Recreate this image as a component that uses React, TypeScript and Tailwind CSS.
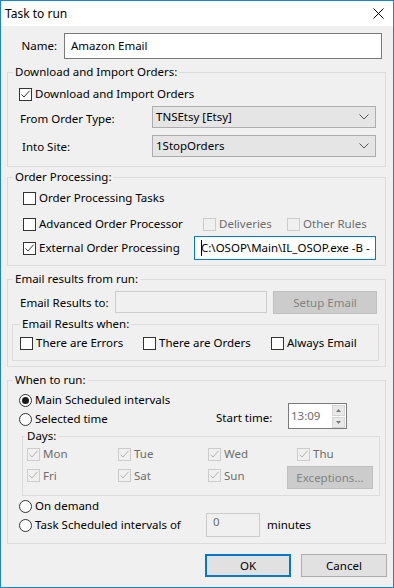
import React from "react";

function Check({ checked = false, disabled = false }: { checked?: boolean; disabled?: boolean }) {
  return (
    <span
      className={
        disabled
          ? "w-[13px] h-[13px] border border-[#cccccc] bg-[#f0f0f0] flex items-center justify-center shrink-0"
          : "w-[13px] h-[13px] border border-[#333333] bg-white flex items-center justify-center shrink-0"
      }
    >
      {checked && (
        <svg width="11" height="11" viewBox="0 0 11 11">
          <path
            d="M1.5 5.5 L4 8 L9.5 1.8"
            fill="none"
            stroke={disabled ? "#b0b0b0" : "#333333"}
            strokeWidth="1"
          />
        </svg>
      )}
    </span>
  );
}

function Radio({ checked = false }: { checked?: boolean }) {
  return (
    <span className="w-[13px] h-[13px] rounded-full border border-[#333333] bg-white flex items-center justify-center shrink-0">
      {checked && <span className="w-[7px] h-[7px] rounded-full bg-[#1a1a1a]" />}
    </span>
  );
}

function Chevron() {
  return (
    <svg width="10" height="6" viewBox="0 0 10 6">
      <path d="M0.5 0.5 L5 5 L9.5 0.5" fill="none" stroke="#555555" strokeWidth="1" />
    </svg>
  );
}

function Select({ value }: { value: string }) {
  return (
    <div className="w-[224px] h-[22px] border border-[#adadad] bg-[#e5e5e5] flex items-center justify-between pl-[3px] pr-[6px]">
      <span>{value}</span>
      <Chevron />
    </div>
  );
}

export default function App() {
  return (
    <div
      className="w-[394px] h-[588px] border border-[#1883d7] bg-[#f0f0f0] flex flex-col text-[11.5px] text-black leading-[16px]"
      style={{ fontFamily: '"Noto Sans", "Segoe UI", sans-serif' }}
    >
      {/* Title bar */}
      <div className="h-[25px] bg-white flex items-center justify-between pl-[4px] pr-[9px] shrink-0">
        <span className="text-[12px]">Task to run</span>
        <svg width="11" height="11" viewBox="0 0 11 11">
          <path d="M0.5 0.5 L10.5 10.5 M10.5 0.5 L0.5 10.5" stroke="#000" strokeWidth="1" />
        </svg>
      </div>

      {/* Name */}
      <div className="mt-[7px] flex items-center h-[26px]">
        <div className="w-[63px] pr-[7px] text-right">Name:</div>
        <div className="w-[318px] h-[26px] border border-[#7a7a7a] bg-white flex items-center px-[6px]">
          Amazon Email
        </div>
      </div>

      {/* Group 1 */}
      <fieldset className="mt-[5px] ml-[6px] w-[379px] border border-[#dcdcdc] pb-[9px]">
        <legend className="ml-[5px] px-[2px] leading-[16px]">Download and Import Orders:</legend>
        <div className="mt-[6px] h-[16px] flex items-center pl-[11px] gap-[3px]">
          <Check checked />
          <span>Download and Import Orders</span>
        </div>
        <div className="mt-[4px] h-[22px] flex items-center">
          <div className="w-[144px] pl-[12px] pt-[3px]">From Order Type:</div>
          <Select value="TNSEtsy [Etsy]" />
        </div>
        <div className="mt-[7px] h-[22px] flex items-center">
          <div className="w-[144px] pl-[14px] pt-[2px]">Into Site:</div>
          <Select value="1StopOrders" />
        </div>
      </fieldset>

      {/* Group 2 */}
      <fieldset className="mt-[2px] ml-[6px] w-[379px] border border-[#dcdcdc] pb-[5px]">
        <legend className="ml-[5px] px-[2px] leading-[16px]">Order Processing:</legend>
        <div className="mt-[5px] h-[16px] flex items-center pl-[15px] gap-[3px]">
          <Check />
          <span>Order Processing Tasks</span>
        </div>
        <div className="mt-[10px] h-[16px] flex items-center pl-[15px]">
          <div className="w-[180px] flex items-center gap-[3px]">
            <Check />
            <span>Advanced Order Processor</span>
          </div>
          <div className="w-[84px] flex items-center gap-[3px] text-[#6d6d6d]">
            <Check disabled />
            <span>Deliveries</span>
          </div>
          <div className="flex items-center gap-[3px] text-[#6d6d6d]">
            <Check disabled />
            <span>Other Rules</span>
          </div>
        </div>
        <div className="mt-[4px] h-[24px] flex items-center pl-[15px]">
          <div className="w-[171px] flex items-center gap-[3px]">
            <Check checked />
            <span>External Order Processing</span>
          </div>
          <div className="w-[182px] h-[24px] border border-[#0078d7] bg-white flex items-center pl-[6px] overflow-hidden whitespace-nowrap">
            <span className="w-[1px] h-[16px] bg-black mr-[-1px]" />
            <span>C:\OSOP\Main\IL_OSOP.exe -B -</span>
          </div>
        </div>
      </fieldset>

      {/* Group 3 */}
      <fieldset className="mt-[5px] ml-[6px] w-[379px] border border-[#dcdcdc] pb-[5px]">
        <legend className="ml-[5px] px-[2px] leading-[16px]">Email results from run:</legend>
        <div className="mt-[4px] h-[23px] flex items-start">
          <div className="w-[107px] pl-[12px] pt-[4px]">Email Results to:</div>
          <div className="w-[152px] h-[22px] border border-[#cccccc] bg-[#f0f0f0]" />
          <div className="ml-[6px] w-[104px] h-[23px] border border-[#bfbfbf] bg-[#cccccc] text-[#838383] flex items-center justify-center">
            Setup Email
          </div>
        </div>
        <fieldset className="mt-[2px] ml-[4px] w-[367px] border border-[#dcdcdc] pb-[9px]">
          <legend className="ml-[7px] px-[2px] leading-[16px]">Email Results when:</legend>
          <div className="mt-[3px] h-[16px] flex items-center pl-[7px]">
            <div className="w-[123px] flex items-center gap-[3px]">
              <Check />
              <span>There are Errors</span>
            </div>
            <div className="w-[128px] flex items-center gap-[3px]">
              <Check />
              <span>There are Orders</span>
            </div>
            <div className="flex items-center gap-[3px]">
              <Check />
              <span>Always Email</span>
            </div>
          </div>
        </fieldset>
      </fieldset>

      {/* Group 4 */}
      <fieldset className="mt-[5px] ml-[6px] w-[379px] border border-[#dcdcdc] pb-[6px]">
        <legend className="ml-[5px] px-[2px] leading-[16px]">When to run:</legend>
        <div className="flex items-start">
          <div className="w-[208px] pl-[11px] pt-[4px] flex flex-col gap-[3px]">
            <div className="h-[16px] flex items-center gap-[3px]">
              <Radio checked />
              <span>Main Scheduled intervals</span>
            </div>
            <div className="h-[16px] flex items-center gap-[3px]">
              <Radio />
              <span>Selected time</span>
            </div>
          </div>
          <div className="mt-[15px] flex items-center">
            <div className="w-[72px] pt-[3px]">Start time:</div>
            <div className="w-[59px] h-[26px] border border-[#7a7a7a] bg-white flex items-center justify-between pl-[2px] pr-[1px]">
              <span className="text-[#6d6d6d]">13:09</span>
              <div className="flex flex-col gap-[1px]">
                <div className="w-[13px] h-[11px] bg-[#e8e8e8] border border-[#d5d5d5] flex items-center justify-center">
                  <svg width="5" height="3" viewBox="0 0 5 3">
                    <path d="M0 3 L2.5 0 L5 3 Z" fill="#7a7a7a" />
                  </svg>
                </div>
                <div className="w-[13px] h-[11px] bg-[#e8e8e8] border border-[#d5d5d5] flex items-center justify-center">
                  <svg width="5" height="3" viewBox="0 0 5 3">
                    <path d="M0 0 L2.5 3 L5 0 Z" fill="#7a7a7a" />
                  </svg>
                </div>
              </div>
            </div>
          </div>
        </div>

        {/* Days */}
        <fieldset className="mt-[-1px] ml-[14px] w-[358px] border border-[#dcdcdc] pb-[6px]">
          <legend className="ml-[2px] px-[2px] leading-[16px]">Days:</legend>
          <div className="mt-[2px] flex text-[#6d6d6d]">
            <div className="pl-[4px] grid grid-cols-[91px_90px_79px]">
              <div className="h-[16px] flex items-center gap-[3px]"><Check checked disabled /><span>Mon</span></div>
              <div className="h-[16px] flex items-center gap-[3px]"><Check checked disabled /><span>Tue</span></div>
              <div className="h-[16px] flex items-center gap-[3px]"><Check checked disabled /><span>Wed</span></div>
              <div className="h-[16px] flex items-center gap-[3px]"><Check checked disabled /><span>Fri</span></div>
              <div className="h-[16px] flex items-center gap-[3px]"><Check checked disabled /><span>Sat</span></div>
              <div className="h-[16px] flex items-center gap-[3px]"><Check checked disabled /><span>Sun</span></div>
            </div>
            <div className="flex flex-col">
              <div className="h-[16px] pl-[10px] flex items-center gap-[3px]"><Check checked disabled /><span>Thu</span></div>
              <div className="mt-[4px] w-[86px] h-[23px] border border-[#bfbfbf] bg-[#cccccc] text-[#838383] flex items-center justify-center">
                Exceptions...
              </div>
            </div>
          </div>
        </fieldset>

        <div className="mt-[3px] h-[14px] pl-[11px] flex items-center gap-[3px]">
          <Radio />
          <span>On demand</span>
        </div>
        <div className="h-[24px] pl-[11px] flex items-center">
          <div className="w-[187px] flex items-center gap-[3px]">
            <Radio />
            <span>Task Scheduled intervals of</span>
          </div>
          <div className="w-[54px] h-[24px] border border-[#cccccc] bg-[#f0f0f0] text-[#6d6d6d] pl-[6px] flex items-start">
            0
          </div>
          <span className="ml-[7px]">minutes</span>
        </div>
      </fieldset>

      {/* Buttons */}
      <div className="mt-[10px] flex justify-end gap-[10px] pr-[6px]">
        <div className="w-[86px] h-[23px] border-2 border-[#0078d7] bg-[#e1e1e1] flex items-center justify-center">
          OK
        </div>
        <div className="w-[86px] h-[23px] border border-[#adadad] bg-[#e1e1e1] flex items-center justify-center">
          Cancel
        </div>
      </div>
    </div>
  );
}
